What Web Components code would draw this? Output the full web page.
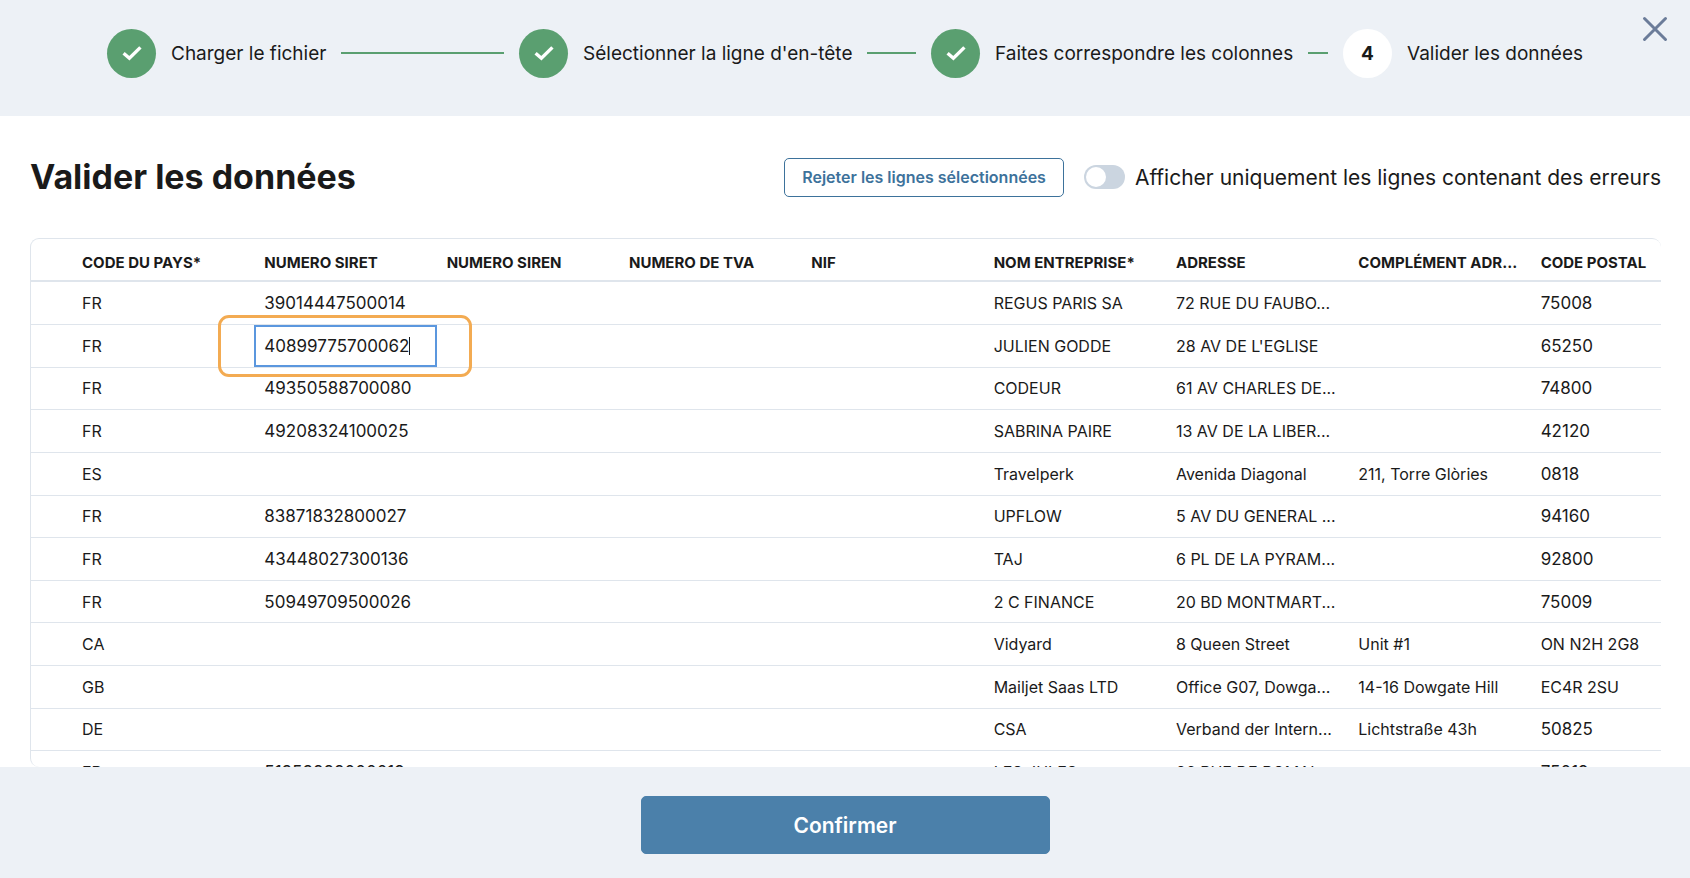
<!DOCTYPE html>
<html lang="fr">
<head>
<meta charset="utf-8">
<title>Valider les données</title>
<style>
  html, body {
    height: 100%;
    margin: 0;
  }
  body {
    background: #fff;
    color: #1a1a1a;
    font-family: Inter, 'Liberation Sans', sans-serif;
  }
</style>
</head>
<body>
<import-wizard>
  <wizard-steps slot="header">
    <wizard-step state="done">Charger le fichier</wizard-step>
    <wizard-step state="done">Sélectionner la ligne d'en-tête</wizard-step>
    <wizard-step state="done">Faites correspondre les colonnes</wizard-step>
    <wizard-step state="current" number="4">Valider les données</wizard-step>
  </wizard-steps>
  <page-toolbar>
    <span slot="title">Valider les données</span>
    <app-button variant="outline">Rejeter les lignes sélectionnées</app-button>
    <toggle-switch>Afficher uniquement les lignes contenant des erreurs</toggle-switch>
  </page-toolbar>
  <data-grid></data-grid>
  <app-button slot="footer" variant="primary">Confirmer</app-button>
</import-wizard>

<script>
function attach(el, html) {
  el.attachShadow({ mode: 'open' });
  const template = document.createElement('template');
  template.innerHTML = html;
  el.shadowRoot.appendChild(template.content.cloneNode(true));
}

class ImportWizard extends HTMLElement {
  constructor() {
    super();
    attach(this, `
      <style>
        :host {
          display: flex;
          flex-direction: column;
          height: 100%;
        }
        header {
          background: #edf1f6;
          flex: none;
          position: relative;
        }
        .close {
          position: absolute;
          top: 13px;
          right: 19px;
          width: 32px;
          height: 32px;
          padding: 0;
          border: 0;
          background: none;
          color: #6b7c99;
          cursor: pointer;
        }
        svg {
          display: block;
        }
        main {
          display: flex;
          flex: 1;
          flex-direction: column;
          min-height: 0;
          overflow: hidden;
          padding: 0 29px 0 30px;
        }
        footer {
          background: #edf1f6;
          display: flex;
          flex: none;
          justify-content: center;
          padding: 29px 0 24px;
        }
      </style>
      <header>
        <slot name="header"></slot>
        <button class="close" type="button" aria-label="Fermer">
          <svg viewBox="0 0 32 32" width="32" height="32">
            <path d="M5.5 5.5l21 21M26.5 5.5l-21 21" stroke="currentColor" stroke-width="3" stroke-linecap="round"/>
          </svg>
        </button>
      </header>
      <main><slot></slot></main>
      <footer><slot name="footer"></slot></footer>
    `);
  }
}

class WizardSteps extends HTMLElement {
  constructor() {
    super();
    attach(this, `
      <style>
        :host {
          box-sizing: border-box;
          display: flex;
          height: 116px;
          padding: 28px 107px 0;
        }
        ::slotted(wizard-step) {
          flex: 1 1 0;
        }
        ::slotted(wizard-step:last-of-type) {
          flex: none;
        }
      </style>
      <slot></slot>
    `);
  }
}

class WizardStep extends HTMLElement {
  constructor() {
    super();
    attach(this, `
      <style>
        :host {
          align-items: center;
          display: flex;
          font-size: 19px;
          gap: 15px;
          height: 50px;
          white-space: nowrap;
        }
        .circle {
          align-items: center;
          background: #5a9f70;
          border-radius: 50%;
          color: #fff;
          display: flex;
          flex: none;
          font-weight: 700;
          height: 49px;
          justify-content: center;
          width: 49px;
        }
        :host([state='current']) .circle {
          background: #fff;
          color: #1a1a1a;
        }
        .line {
          background: #5a9f70;
          flex: 1;
          height: 2px;
          margin-right: 15px;
        }
        :host([state='current']) .line {
          display: none;
        }
      </style>
      <span class="circle"></span>
      <span><slot></slot></span>
      <span class="line"></span>
    `);
  }

  connectedCallback() {
    const circle = this.shadowRoot.querySelector('.circle');
    if (this.getAttribute('state') === 'done') {
      circle.innerHTML = `
        <svg viewBox="0 0 22 18" width="22" height="18" fill="none">
          <path d="M2.6 9.2l5.8 5L19.4 3.4" stroke="#fff" stroke-width="3.4"/>
        </svg>`;
    } else {
      circle.textContent = this.getAttribute('number');
    }
  }
}

class PageToolbar extends HTMLElement {
  constructor() {
    super();
    attach(this, `
      <style>
        :host {
          align-items: center;
          display: flex;
          flex: none;
          gap: 20px;
          height: 122px;
        }
        h1 {
          flex: 1;
          font-size: 34px;
          font-weight: 700;
          line-height: 44px;
          margin: 0;
          white-space: nowrap;
        }
      </style>
      <h1><slot name="title"></slot></h1>
      <slot></slot>
    `);
  }
}

class AppButton extends HTMLElement {
  constructor() {
    super();
    attach(this, `
      <style>
        :host {
          display: block;
        }
        button {
          border: 1px solid #3d729b;
          border-radius: 5px;
          box-sizing: border-box;
          cursor: pointer;
          display: block;
          font: inherit;
          font-weight: 600;
          white-space: nowrap;
        }
        .outline {
          background: #fff;
          color: #3d729b;
          font-size: 16px;
          height: 39px;
          padding: 0 17px;
        }
        .primary {
          background: #4b80aa;
          border-color: #4b80aa;
          color: #fff;
          font-size: 21px;
          height: 58px;
          width: 409px;
        }
      </style>
      <button type="button"><slot></slot></button>
    `);
  }

  connectedCallback() {
    this.shadowRoot.querySelector('button').className = this.getAttribute('variant');
  }
}

class ToggleSwitch extends HTMLElement {
  constructor() {
    super();
    attach(this, `
      <style>
        :host {
          display: block;
        }
        label {
          align-items: center;
          cursor: pointer;
          display: flex;
          font-size: 21px;
          gap: 10px;
          white-space: nowrap;
        }
        input {
          appearance: none;
          background: #cbd5e0;
          border-radius: 12px;
          flex: none;
          height: 24px;
          margin: 0;
          padding: 2px;
          width: 41px;
        }
        input::before {
          background: #fff;
          border-radius: 50%;
          content: '';
          display: block;
          height: 20px;
          width: 20px;
        }
        input:checked {
          background: #4b80aa;
        }
        input:checked::before {
          margin-left: auto;
        }
      </style>
      <label><input type="checkbox" role="switch"><span><slot></slot></span></label>
    `);
  }
}

const columns = [
  'CODE DU PAYS*', 'NUMERO SIRET', 'NUMERO SIREN', 'NUMERO DE TVA', 'NIF',
  'NOM ENTREPRISE*', 'ADRESSE', 'COMPLÉMENT ADR...', 'CODE POSTAL'
];

// pays, siret, nom, adresse, complément, code postal
const rows = [
  ['FR', '39014447500014', 'REGUS PARIS SA', '72 RUE DU FAUBO...', '', '75008'],
  ['FR', '40899775700062', 'JULIEN GODDE', "28 AV DE L'EGLISE", '', '65250'],
  ['FR', '49350588700080', 'CODEUR', '61 AV CHARLES DE...', '', '74800'],
  ['FR', '49208324100025', 'SABRINA PAIRE', '13 AV DE LA LIBER...', '', '42120'],
  ['ES', '', 'Travelperk', 'Avenida Diagonal', '211, Torre Glòries', '0818'],
  ['FR', '83871832800027', 'UPFLOW', '5 AV DU GENERAL ...', '', '94160'],
  ['FR', '43448027300136', 'TAJ', '6 PL DE LA PYRAM...', '', '92800'],
  ['FR', '50949709500026', '2 C FINANCE', '20 BD MONTMART...', '', '75009'],
  ['CA', '', 'Vidyard', '8 Queen Street', 'Unit #1', 'ON N2H 2G8'],
  ['GB', '', 'Mailjet Saas LTD', 'Office G07, Dowga...', '14-16 Dowgate Hill', 'EC4R 2SU'],
  ['DE', '', 'CSA', 'Verband der Intern...', 'Lichtstraße 43h', '50825'],
  ['FR', '51353888000019', 'LES JULES', '26 RUE DE ROMAI', '', '75019']
];

const editedRow = 1;

class DataGrid extends HTMLElement {
  constructor() {
    super();
    attach(this, `
      <style>
        :host {
          border: 1px solid #dfe5ec;
          border-radius: 9px;
          border-width: 1px 0 0 1px;
          display: block;
          flex: 1;
          min-height: 0;
          overflow: hidden;
        }
        table {
          border-collapse: separate;
          border-spacing: 0;
          font-size: 16px;
          height: 555px;
          table-layout: fixed;
          width: calc(100% + 52px);
        }
        th, td {
          border-bottom: 1px solid #dfe5ec;
          box-sizing: border-box;
          line-height: 20px;
          padding: 0 0 0 10px;
          text-align: left;
          white-space: nowrap;
        }
        th {
          border-bottom-width: 2px;
          font-size: 15px;
          font-weight: 700;
          height: 43px;
          padding-top: 6px;
        }
        .select {
          width: 41px;
        }
        .number {
          font-size: 17px;
        }
        .edited {
          height: 42px;
          padding: 0;
          position: relative;
        }
        .editor {
          align-items: center;
          border: 2px solid #5b97de;
          box-sizing: border-box;
          display: flex;
          height: 100%;
          min-height: 42px;
          padding-left: 8px;
        }
        .editor input {
          background: none;
          border: 0;
          caret-color: transparent;
          color: inherit;
          field-sizing: content;
          font: inherit;
          outline: 0;
          padding: 0;
        }
        .caret {
          background: #1a1a1a;
          height: 18px;
          width: 1px;
        }
        .highlight {
          border: 3px solid #f3ab52;
          border-radius: 11px;
          bottom: -10px;
          left: -36px;
          pointer-events: none;
          position: absolute;
          right: -35px;
          top: -10px;
          z-index: 1;
        }
      </style>
      <table>
        <thead><tr><th class="select"></th></tr></thead>
        <tbody></tbody>
      </table>
    `);
  }

  connectedCallback() {
    const head = this.shadowRoot.querySelector('thead tr');
    const body = this.shadowRoot.querySelector('tbody');

    columns.forEach(name => {
      const th = document.createElement('th');
      th.textContent = name;
      head.appendChild(th);
    });

    rows.forEach(([country, siret, ...rest], i) => {
      const tr = body.insertRow();
      ['', country, siret, '', '', '', ...rest].forEach((value, col) => {
        const td = tr.insertCell();
        if (/^\d+$/.test(value)) td.classList.add('number');
        if (i === editedRow && col === 2) {
          td.classList.add('edited');
          td.innerHTML = `
            <div class="editor">
              <input type="text" aria-label="NUMERO SIRET" value="${value}"><span class="caret"></span>
            </div>
            <div class="highlight"></div>`;
        } else {
          td.textContent = value;
        }
      });
    });
  }
}

customElements.define('import-wizard', ImportWizard);
customElements.define('wizard-steps', WizardSteps);
customElements.define('wizard-step', WizardStep);
customElements.define('page-toolbar', PageToolbar);
customElements.define('app-button', AppButton);
customElements.define('toggle-switch', ToggleSwitch);
customElements.define('data-grid', DataGrid);
</script>
</body>
</html>
